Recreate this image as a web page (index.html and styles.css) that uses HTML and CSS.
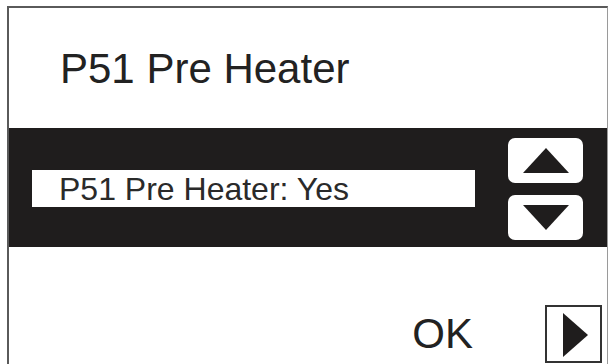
FILE: index.html
```html
<!DOCTYPE html>
<html lang="en">
<head>
    <meta charset="UTF-8">
    <meta name="viewport" content="width=device-width, initial-scale=1.0">
    <title>P51 Pre Heater</title>
    <link rel="stylesheet" href="styles.css">
</head>
<body>

    <div class="screen">
        <div class="header">
            <h1 class="title">P51 Pre Heater</h1>
        </div>

        <div class="band">
            <div class="value-box">P51 Pre Heater: Yes</div>
            <div class="arrows">
                <button class="arrow-btn" aria-label="Up">
                    <svg width="46" height="25" viewBox="0 0 46 25"><polygon points="23,0 46,25 0,25" fill="#1f1d1d"/></svg>
                </button>
                <button class="arrow-btn" aria-label="Down">
                    <svg width="46" height="25" viewBox="0 0 46 25"><polygon points="0,0 46,0 23,25" fill="#1f1d1d"/></svg>
                </button>
            </div>
        </div>

        <div class="footer">
            <span class="ok-label">OK</span>
            <button class="next-btn" aria-label="Next">
                <svg width="25" height="44" viewBox="0 0 25 44"><polygon points="0,0 25,22 0,44" fill="#1f1d1d"/></svg>
            </button>
        </div>
    </div>

</body>
</html>
```

FILE: styles.css
```css
body {
    margin: 0;
    background: #fff;
    font-family: "Liberation Sans", Arial, Helvetica, sans-serif;
    color: #222;
    height: 364px;
    overflow: hidden;
}

.screen {
    margin: 6px 0 0 7px;
    width: 598px;
    height: 358px;
    border-top: 2px solid #5a5a5a;
    border-left: 2px solid #5a5a5a;
    border-right: 1px solid #9a9a9a;
    display: flex;
    flex-direction: column;
}

.header {
    height: 120px;
    padding: 40px 0 0 51px;
    box-sizing: border-box;
}

.title {
    margin: 0;
    font-size: 42px;
    font-weight: normal;
    line-height: 42px;
    color: #222;
}

/* dark selection band */
.band {
    height: 119px;
    background: #1f1d1d;
    display: flex;
    align-items: center;
    padding-left: 23px;
    padding-top: 2px;
    box-sizing: border-box;
}

.value-box {
    width: 443px;
    height: 37px;
    background: #fff;
    box-sizing: border-box;
    padding-left: 27px;
    font-size: 32px;
    line-height: 38px;
    color: #2a2a2a;
    white-space: nowrap;
    overflow: hidden;
}

.arrows {
    margin-left: 33px;
    display: flex;
    flex-direction: column;
    gap: 12px;
}

.arrow-btn {
    width: 75px;
    height: 45px;
    border: none;
    border-radius: 7px;
    background: #fff;
    padding: 0;
    display: flex;
    align-items: center;
    justify-content: center;
    cursor: pointer;
}

.footer {
    flex: 1;
    display: flex;
    justify-content: flex-end;
    align-items: flex-start;
    padding: 58px 5px 0 0;
}

.ok-label {
    font-size: 42px;
    line-height: 58px;
    color: #222;
    margin-right: 72px;
}

.next-btn {
    width: 57px;
    height: 58px;
    border: 2px solid #333;
    background: #fff;
    padding: 6px 0 0 16px;
    box-sizing: border-box;
    display: flex;
    align-items: flex-start;
    cursor: pointer;
}
```
